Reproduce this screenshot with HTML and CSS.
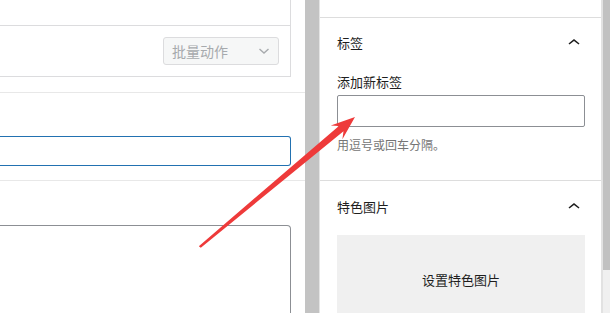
FILE: index.html
```html
<!DOCTYPE html>
<html lang="zh-CN">
<head>
    <meta charset="UTF-8">
    <title>文章编辑</title>
    <link rel="stylesheet" href="styles.css">
</head>
<body>
    <div class="screen">
        <!-- 左侧主区域 -->
        <div class="main">
            <div class="list-box">
                <div class="list-top"></div>
                <div class="list-actions">
                    <div class="bulk-select">
                        <span>批量动作</span>
                        <svg width="16" height="16" viewBox="0 0 16 16"><path d="M3.5 6l4.5 4 4.5-4" fill="none" stroke="#a7aaad" stroke-width="1.4"/></svg>
                    </div>
                </div>
            </div>
            <div class="block block-title">
                <div class="title-input"></div>
            </div>
            <div class="block block-text">
                <div class="text-area"></div>
            </div>
        </div>

        <div class="gutter"></div>

        <!-- 右侧边栏 -->
        <div class="sidebar">
            <div class="sidebar-top"></div>
            <div class="panel panel-tags">
                <div class="panel-head">
                    <span>标签</span>
                    <svg class="chevron" width="24" height="24" viewBox="0 0 24 24"><path d="M6.5 12.4L12 8l5.5 4.4-.9 1.2L12 10l-4.5 3.6-1-1.2z" fill="#1e1e1e"/></svg>
                </div>
                <div class="field-label">添加新标签</div>
                <div class="tag-input"></div>
                <div class="field-help">用逗号或回车分隔。</div>
            </div>
            <div class="panel panel-image">
                <div class="panel-head">
                    <span>特色图片</span>
                    <svg class="chevron" width="24" height="24" viewBox="0 0 24 24"><path d="M6.5 12.4L12 8l5.5 4.4-.9 1.2L12 10l-4.5 3.6-1-1.2z" fill="#1e1e1e"/></svg>
                </div>
                <div class="image-box">设置特色图片</div>
            </div>
        </div>

        <div class="scrollbar">
            <div class="thumb"></div>
        </div>

        <!-- 红色箭头标注 -->
        <svg class="arrow" width="610" height="313" viewBox="0 0 610 313">
            <polygon points="198.8,246.2 338.9,125.9 330.8,125.5 355,117 342.4,139.3 343.5,131.3 200.8,247.8" fill="#ee3a3a"/>
        </svg>
    </div>
</body>
</html>
```

FILE: styles.css
```css
body {
    margin: 0;
    font-family: "Noto Sans CJK SC", "Noto Sans", sans-serif;
    color: #1e1e1e;
    background: #fff;
}
.screen {
    position: relative;
    display: flex;
    width: 610px;
    height: 313px;
    overflow: hidden;
}
.main {
    width: 305px;
    flex-shrink: 0;
}
.list-box {
    width: 290px;
    height: 76px;
    border-right: 1px solid #dcdcde;
    border-bottom: 1px solid #dcdcde;
}
.list-top {
    height: 25px;
    border-bottom: 1px solid #dcdcde;
}
.list-actions {
    display: flex;
    justify-content: flex-end;
    padding: 11px 11px 0 0;
}
.bulk-select {
    display: flex;
    align-items: center;
    justify-content: space-between;
    box-sizing: border-box;
    width: 116px;
    height: 28px;
    padding: 0 6px 0 8px;
    background: #f6f7f7;
    border: 1px solid #dcdcde;
    border-radius: 3px;
    color: #a7aaad;
    font-size: 14px;
}
.block {
    border-top: 1px solid #e8e8e8;
}
.block-title {
    margin-top: 15px;
    height: 88px;
    padding-top: 43px;
    box-sizing: border-box;
}
.title-input {
    width: 291px;
    height: 30px;
    box-sizing: border-box;
    border: 1px solid #2271b1;
    border-left: none;
    border-radius: 0 3px 3px 0;
}
.block-text {
    padding-top: 44px;
}
.text-area {
    width: 291px;
    height: 120px;
    box-sizing: border-box;
    border: 1px solid #8c8f94;
    border-left: none;
    border-radius: 0 4px 0 0;
}
.gutter {
    width: 14px;
    flex-shrink: 0;
    background: #c3c3c3;
}
.sidebar {
    width: 282px;
    flex-shrink: 0;
    border-left: 1px solid #e4e4e4;
    box-sizing: border-box;
}
.sidebar-top {
    height: 17px;
    border-bottom: 1px solid #dddddd;
}
.panel {
    padding: 0 16px 0 17px;
}
.panel-tags {
    height: 163px;
    box-sizing: border-box;
    border-bottom: 1px solid #dddddd;
}
.panel-head {
    display: flex;
    align-items: center;
    justify-content: space-between;
    height: 50px;
    font-size: 13px;
    line-height: 18px;
}
.chevron {
    margin-right: -1px;
}
.panel-image .panel-head {
    height: 52px;
}
.field-label {
    margin-top: 5px;
    font-size: 13px;
    line-height: 18px;
}
.tag-input {
    margin-top: 4px;
    height: 32px;
    width: 248px;
    box-sizing: border-box;
    border: 1px solid #8c8f94;
    border-radius: 2px;
}
.field-help {
    margin-top: 9px;
    font-size: 12px;
    line-height: 18px;
    color: #757575;
}
.image-box {
    margin-top: 2px;
    width: 248px;
    height: 90px;
    padding-top: 36px;
    box-sizing: border-box;
    background: #f0f0f0;
    text-align: center;
    font-size: 13px;
    line-height: 18px;
}
.scrollbar {
    width: 9px;
    flex-shrink: 0;
    background: #f0f0f0;
    border-left: 2px solid #e2e2e2;
    box-sizing: border-box;
}
.thumb {
    height: 270px;
    background: #c1c1c1;
}
.arrow {
    position: absolute;
    left: 0;
    top: 0;
    pointer-events: none;
}
```
